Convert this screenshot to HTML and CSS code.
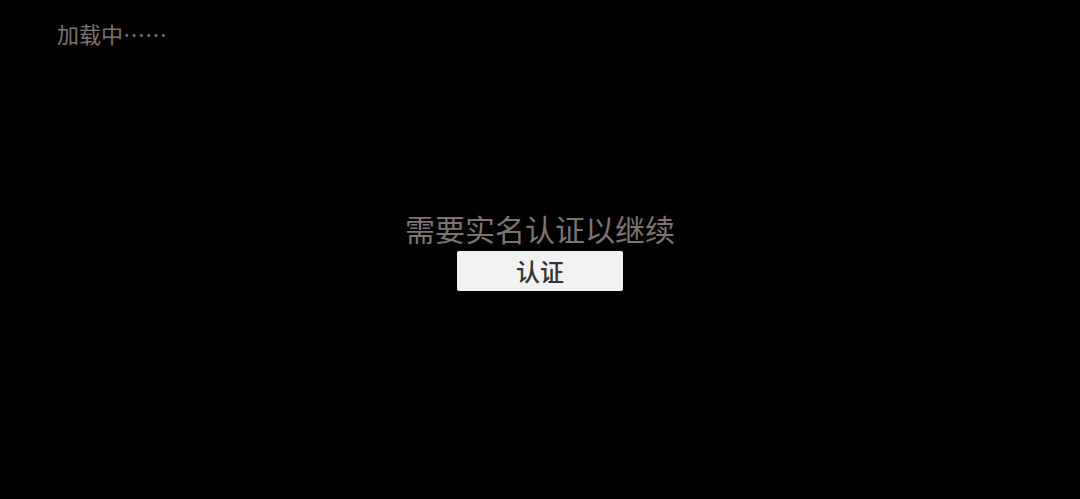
FILE: index.html
```html
<!DOCTYPE html>
<html lang="zh-CN">
<head>
<meta charset="utf-8">
<title>加载中</title>
<link rel="stylesheet" href="styles.css">
</head>
<body>
<div class="page">
  <div class="loading">加载中……</div>
  <div class="center">
    <div class="prompt">需要实名认证以继续</div>
    <button class="verify-btn" type="button">认证</button>
  </div>
</div>
</body>
</html>
```

FILE: styles.css
```css
html, body {
  margin: 0;
  padding: 0;
  background: #000;
  width: 1080px;
  height: 499px;
  overflow: hidden;
  font-family: "Noto Sans CJK SC", "Noto Sans", sans-serif;
}

.page {
  position: relative;
  width: 1080px;
  height: 499px;
  display: flex;
  flex-direction: column;
}

.loading {
  position: absolute;
  left: 57px;
  top: 18px;
  font-size: 22px;
  line-height: 30px;
  color: #7d7370;
}

.center {
  flex: 1;
  display: flex;
  flex-direction: column;
  align-items: center;
  justify-content: center;
  padding-top: 2px;
}

.prompt {
  font-size: 30px;
  line-height: 36px;
  color: #7f7471;
  margin-bottom: 5px;
}

.verify-btn {
  width: 166px;
  height: 40px;
  border: none;
  border-radius: 2px;
  background: #f2f2f2;
  color: #333;
  font-family: inherit;
  font-size: 24px;
  font-weight: 500;
  line-height: 40px;
  padding: 0;
  cursor: pointer;
}
```
